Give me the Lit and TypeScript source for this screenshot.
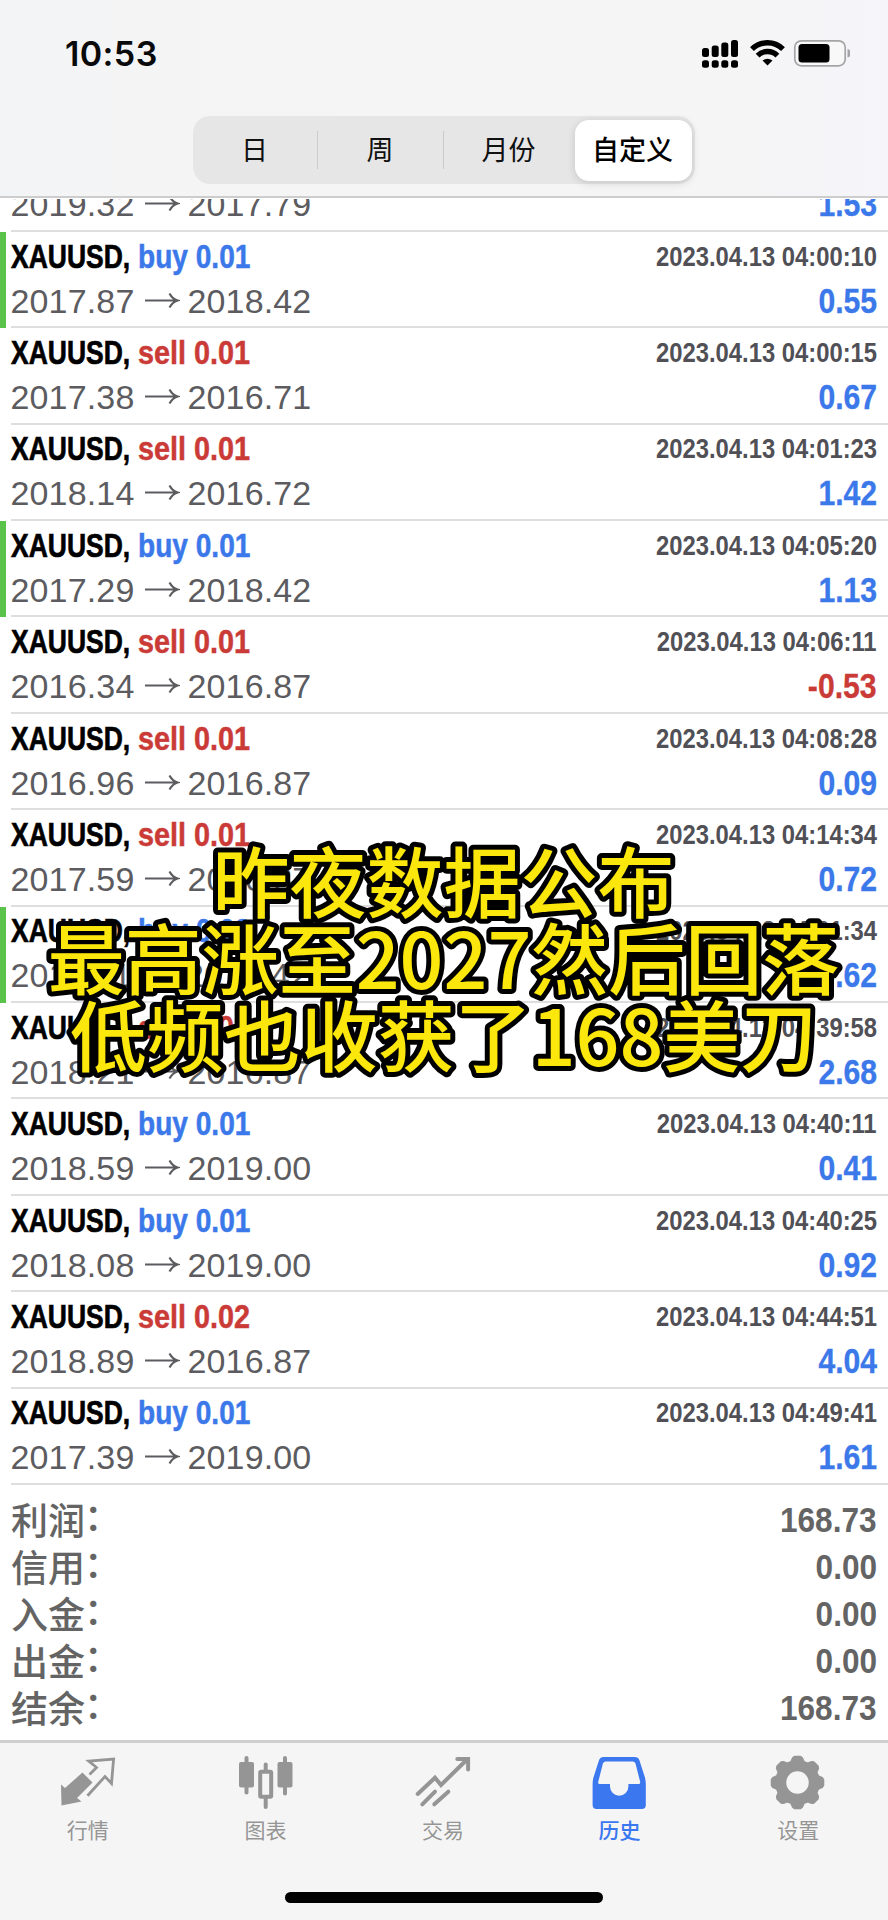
import { LitElement, html, css, svg } from "lit";
import { customElement } from "lit/decorators.js";
import { classMap } from "lit/directives/class-map.js";

interface Deal {
  side: "buy" | "sell";
  vol: string;
  open: string;
  close: string;
  time: string;
  profit: string;
  tp?: boolean;
}

const deals: Deal[] = [
  { side: "buy", vol: "0.01", open: "2017.87", close: "2018.42", time: "04:00:10", profit: "0.55", tp: true },
  { side: "sell", vol: "0.01", open: "2017.38", close: "2016.71", time: "04:00:15", profit: "0.67" },
  { side: "sell", vol: "0.01", open: "2018.14", close: "2016.72", time: "04:01:23", profit: "1.42" },
  { side: "buy", vol: "0.01", open: "2017.29", close: "2018.42", time: "04:05:20", profit: "1.13", tp: true },
  { side: "sell", vol: "0.01", open: "2016.34", close: "2016.87", time: "04:06:11", profit: "-0.53" },
  { side: "sell", vol: "0.01", open: "2016.96", close: "2016.87", time: "04:08:28", profit: "0.09" },
  { side: "sell", vol: "0.01", open: "2017.59", close: "2016.87", time: "04:14:34", profit: "0.72" },
  { side: "buy", vol: "0.02", open: "2018.11", close: "2018.42", time: "04:21:34", profit: "0.62", tp: true },
  { side: "sell", vol: "0.02", open: "2018.21", close: "2016.87", time: "04:39:58", profit: "2.68" },
  { side: "buy", vol: "0.01", open: "2018.59", close: "2019.00", time: "04:40:11", profit: "0.41" },
  { side: "buy", vol: "0.01", open: "2018.08", close: "2019.00", time: "04:40:25", profit: "0.92" },
  { side: "sell", vol: "0.02", open: "2018.89", close: "2016.87", time: "04:44:51", profit: "4.04" },
  { side: "buy", vol: "0.01", open: "2017.39", close: "2019.00", time: "04:49:41", profit: "1.61" },
];

const totals = [
  ["利润", "168.73"],
  ["信用", "0.00"],
  ["入金", "0.00"],
  ["出金", "0.00"],
  ["结余", "168.73"],
];

const gearPath = (() => {
  const pts: string[] = [];
  for (let i = 0; i < 8; i++) {
    const a = (i * Math.PI) / 4 - Math.PI / 2;
    for (const [d, r] of [[-0.3, 21.8], [-0.19, 25.2], [-0.11, 26.2], [0.11, 26.2], [0.19, 25.2], [0.3, 21.8]]) {
      pts.push(`${(28 + r * Math.cos(a + d)).toFixed(2)} ${(28 + r * Math.sin(a + d)).toFixed(2)}`);
    }
  }
  return `M${pts.join("L")}ZM28 16a12 12 0 1 0 0 24a12 12 0 1 0 0-24Z`;
})();

const tabs = [
  {
    label: "行情",
    icon: svg`<path d="M2 27.5L6 31L23.500 15.500L33.500 25.500L18 41L22.500 44.500L2.500 48.500Z" fill="currentColor"/>
      <path d="M30.500 17.500L37.500 10.500L29.800 4.200L54.600 2L52.500 26.500L46 19.500L28.500 38.800" fill="none" stroke="currentColor" stroke-width="2.8"/>`,
  },
  {
    label: "图表",
    icon: svg`<g transform="translate(1.500,0)"><g fill="currentColor"><rect x="1.500" y="5" width="15" height="25.500" rx="2"/><rect x="7" y="-1" width="4" height="38.500" rx="2"/>
      <rect x="40" y="5" width="15" height="25.500" rx="2"/><rect x="45.500" y="-1" width="4" height="39.500" rx="2"/>
      <rect x="26.200" y="5.500" width="4" height="9" rx="2"/><rect x="26.200" y="39" width="4" height="13" rx="2"/></g>
      <rect x="22.700" y="14.700" width="11" height="25" rx="1" fill="none" stroke="currentColor" stroke-width="4"/></g>`,
  },
  {
    label: "交易",
    icon: svg`<g fill="none" stroke="currentColor" stroke-width="4" stroke-linecap="round">
      <path d="M3.700 37L21 20.700L27 28L53 2.500"/><path d="M43.300 2H54.100V12.500"/>
      <path d="M21 34.700L8.300 47.300M34.300 34.700L20.300 47.300"/></g>`,
  },
  {
    label: "历史",
    active: true,
    icon: svg`<path transform="translate(-0.800,0)" fill="currentColor" fill-rule="evenodd" d="M12.500 0H43.500Q47 0 48.200 3.200L53.600 20Q54.600 23.500 54.600 27V48Q54.600 52 50.600 52H5.400Q1.400 52 1.400 48V27Q1.400 23.500 2.400 20L7.800 3.200Q9 0 12.500 0ZM14.500 4.500Q12.500 4.500 11.700 6.500L7 25Q6.800 27 8.500 27H18.800V29.500A9.200 9.200 0 0 0 37.200 29.500V27H47.500Q49.200 27 49 25L44.300 6.500Q43.500 4.500 41.500 4.500Z"/>`,
  },
  {
    label: "设置",
    icon: svg`<path transform="translate(0.500,-2.500)" fill="currentColor" fill-rule="evenodd" stroke="currentColor" stroke-width="1.500" stroke-linejoin="round" d="${gearPath}"/>`,
  },
];

@customElement("app-root")
export class AppRoot extends LitElement {
  static styles = css`
    :host {
      display: block;
      width: 888px;
      height: 1920px;
      position: relative;
      overflow: hidden;
      background: #fff;
      font-family: "Liberation Sans", "Noto Sans CJK SC", sans-serif;
    }
    * { box-sizing: border-box; }
    .screen { display: flex; flex-direction: column; height: 1920px; }
    header {
      height: 198px;
      flex: none;
      background: linear-gradient(90deg, #f3f4f5, #f6f5f6 40%, #f5f5f5 80%, #f5f5fa);
      border-bottom: 2px solid #cdcdce;
      display: flex;
      flex-direction: column;
      align-items: center;
    }
    .status {
      width: 100%;
      height: 116px;
      flex: none;
      display: flex;
      justify-content: space-between;
      padding: 33px 38px 0 65px;
    }
    .clock { font: 600 34px/42px Inter, sans-serif; letter-spacing: 0.4px; color: #0a0a0a; }
    .signals { width: 152px; height: 36px; margin-top: 3px; }
    .segments {
      width: 502px;
      height: 68px;
      border-radius: 17px;
      background: #e6e6e7;
      display: grid;
      grid-template-columns: 125px 126px 131px 117px;
      padding: 4px 3px 3px 0;
      font: 400 27px/60px "Noto Sans CJK SC", sans-serif;
      color: #111;
      margin-right: 1px;
    }
    .seg { text-align: center; position: relative; line-height: 58px; padding-right: 1px; }
    .seg.rule::after {
      content: "";
      position: absolute;
      right: 0;
      top: 11px;
      width: 1px;
      height: 38px;
      background: #cbcbcd;
    }
    .seg.on {
      font-weight: 500;
      color: #000;
      background: #fff;
      border-radius: 14px;
      box-shadow: 0 2px 8px rgba(0, 0, 0, 0.14);
    }
    .list {
      height: 1287px;
      flex: none;
      overflow: hidden;
      display: flex;
      flex-direction: column;
      justify-content: flex-end;
    }
    .deal {
      height: 96.42px;
      flex: none;
      border-left: 6.500px solid transparent;
      padding: 2.800px 11px 0 4.500px;
      background: linear-gradient(#dedee0, #dedee0) 4.500px 100% / 100% 2px no-repeat;
    }
    .deal.tp { border-left-color: #5bc24b; }
    .deal.partial { height: 33px; padding-top: 0; overflow: hidden; }
    .deal.partial .line { margin-top: -16.500px; }
    .line { display: flex; justify-content: space-between; height: 44px; line-height: 44px; white-space: pre; }
    .title { display: flex; font-weight: 700; font-size: 33.500px; }
    .sym { width: 127px; color: #000; -webkit-text-stroke: 0.700px; }
    .sym span, .op span { display: inline-block; transform-origin: 0 50%; }
    .sym span { transform: scaleX(0.79); }
    .op { -webkit-text-stroke: 0.500px; }
    .buy span { transform: scaleX(0.838); }
    .sell span { transform: scaleX(0.86); }
    .buy { color: #3b78ea; }
    .sell { color: #ca3b37; }
    .time {
      font-weight: 700;
      font-size: 27.800px;
      color: #505056;
      transform: scaleX(0.857);
      transform-origin: 100% 50%;
    }
    .prices { display: flex; font-size: 34px; letter-spacing: 0.150px; color: #5c5c60; }
    .prices svg { width: 35px; height: 20px; margin: 11px 7px 0 11px; flex: none; }
    .profit {
      font-weight: 700;
      font-size: 34.500px;
      transform: scaleX(0.875);
      transform-origin: 100% 50%;
      color: #3b78ea;
      -webkit-text-stroke: 0.300px;
    }
    .profit.loss { color: #ca3b37; }
    .totals { height: 255px; flex: none; padding: 11.500px 11px 0 11px; color: #646464; }
    .total { display: flex; justify-content: space-between; height: 47.100px; line-height: 47px; }
    .label { font: 500 37px/45px "Noto Sans CJK SC", sans-serif; }
    .colon { display: inline-block; transform: translate(-1px, -4px); }
    .sum {
      font-weight: 700;
      font-size: 35.500px;
      transform: scaleX(0.89);
      transform-origin: 100% 50%;
    }
    footer {
      flex: 1;
      background: #f5f5f5;
      border-top: 3px solid #cfcfcf;
      display: flex;
      flex-direction: column;
      align-items: center;
    }
    .tabs { width: 100%; display: grid; grid-template-columns: repeat(5, 1fr); height: 149px; flex: none; }
    .tab { display: flex; flex-direction: column; align-items: center; color: #959595; padding: 14px 4px 0 0; }
    .tab.active { color: #3b78ef; }
    .tab svg { width: 56px; height: 52px; overflow: visible; flex: none; }
    .tab span { font: 400 21px/30px "Noto Sans CJK SC", sans-serif; margin-top: 5px; padding-left: 2px; }
    .tab.active span { font-weight: 500; padding: 0; }
    .home { width: 318px; height: 11px; border-radius: 6px; background: #000; }
    .caption {
      position: absolute;
      left: 0;
      top: 830px;
      width: 888px;
      height: 260px;
      font: 500 77px "Noto Sans CJK SC", sans-serif;
      text-anchor: middle;
      fill: #fbe70c;
      stroke: #000;
      stroke-width: 10px;
      paint-order: stroke fill;
      stroke-linejoin: round;
    }
  `;

  private prices(open: string, close: string, profit: string) {
    return html`<div class="line">
      <div class="prices">
        <span>${open}</span>
        <svg viewBox="0 0 35 20">
          <path d="M0 10.500H32M24.500 3.500Q27.500 9 32.500 10.500Q27.500 12 24.500 17.500" fill="none" stroke="#5c5c60" stroke-width="2.200" />
        </svg>
        <span>${close}</span>
      </div>
      <div class=${classMap({ profit: true, loss: profit.startsWith("-") })}>${profit}</div>
    </div>`;
  }

  render() {
    return html`
      <div class="screen">
        <header>
          <div class="status">
            <div class="clock">10:53</div>
            <svg class="signals" viewBox="0 0 152 36">
              <rect x="4" y="12" width="7" height="9" rx="2.500" />
              <rect x="13.700" y="9.500" width="7" height="11.500" rx="2.500" />
              <rect x="23.300" y="6.500" width="7" height="14.500" rx="2.500" />
              <rect x="33" y="4" width="7" height="17" rx="2.500" />
              <rect x="4" y="24.300" width="7" height="7.500" rx="2.500" />
              <rect x="13.700" y="24.300" width="7" height="7.500" rx="2.500" />
              <rect x="23.300" y="24.300" width="7" height="7.500" rx="2.500" />
              <rect x="33" y="24.300" width="7" height="7.500" rx="2.500" />
              <g fill="none" stroke="#000" stroke-width="5.400">
                <path d="M54 13.200A22 22 0 0 1 85 13.200" />
                <path d="M59.600 19.600A14 14 0 0 1 79.400 19.600" />
              </g>
              <path d="M69.500 29.500L64.500 24.600Q69.500 20.800 74.500 24.600Z" />
              <rect x="96.800" y="4.800" width="50.400" height="25" rx="6.500" fill="#f8f8f8" stroke="#a5a5a7" stroke-width="1.700" />
              <rect x="100.500" y="8" width="31" height="18.500" rx="3.500" />
              <path d="M149.500 13Q153 14 153 17.300T149.500 21.500Z" fill="#a5a5a7" />
            </svg>
          </div>
          <div class="segments">
            <div class="seg rule">日</div>
            <div class="seg rule">周</div>
            <div class="seg">月份</div>
            <div class="seg on">自定义</div>
          </div>
        </header>
        <div class="list">
          <div class="deal partial">${this.prices("2019.32", "2017.79", "1.53")}</div>
          ${deals.map(
            (d) => html`<div class=${classMap({ deal: true, tp: !!d.tp })}>
              <div class="line">
                <div class="title">
                  <div class="sym"><span>XAUUSD,</span></div>
                  <div class="op ${d.side}"><span>${d.side} ${d.vol}</span></div>
                </div>
                <div class="time">2023.04.13 ${d.time}</div>
              </div>
              ${this.prices(d.open, d.close, d.profit)}
            </div>`
          )}
        </div>
        <div class="totals">
          ${totals.map(
            ([k, v]) => html`<div class="total"><span class="label">${k}<span class="colon">：</span></span><span class="sum">${v}</span></div>`
          )}
        </div>
        <footer>
          <div class="tabs">
            ${tabs.map(
              (t) => html`<div class=${classMap({ tab: true, active: !!t.active })}>
                <svg viewBox="0 0 56 52">${t.icon}</svg>
                <span>${t.label}</span>
              </div>`
            )}
          </div>
          <div class="home"></div>
        </footer>
      </div>
      <svg class="caption" viewBox="0 0 888 260">
        <text x="443.500" y="82">昨夜数据公布</text>
        <text x="443.500" y="159">最高涨至2027然后回落</text>
        <text x="443.500" y="236">低频也收获了168美刀</text>
      </svg>
    `;
  }
}
